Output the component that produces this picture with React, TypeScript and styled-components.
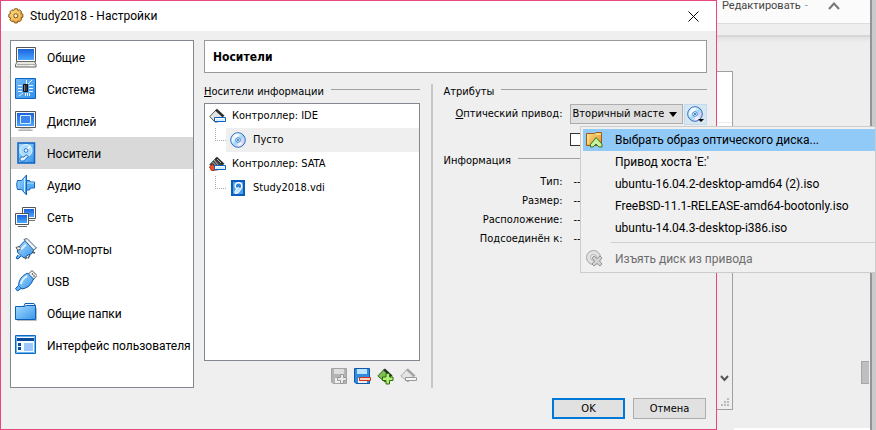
import React from "react";
import styled, { createGlobalStyle, css } from "styled-components";

const ui = `Roboto, "Noto Sans", sans-serif`;
const dlg = `"DejaVu Sans Condensed", "Noto Sans", sans-serif`;

const GlobalStyle = createGlobalStyle`
  * { box-sizing: border-box; }
  body { margin: 0; background: #eeeeee; color: #000; font: 12px/16px ${ui}; }
  button, select, input { font: inherit; color: inherit; margin: 0; }
  button { padding: 0; border: 0; background: none; cursor: default; }
  ul, dl, dd, h1, h2 { margin: 0; padding: 0; list-style: none; font: inherit; }
  svg { display: block; flex: none; }
`;

const Desktop = styled.div`
  display: grid;
  grid-template-columns: minmax(0, 1fr) 159px;
  min-height: 100vh;
  overflow: hidden;
`;

/* ---------- settings dialog ---------- */

const Dialog = styled.main`
  display: flex;
  flex-direction: column;
  border: 1px solid #e8467f;
  background: #efefef;
  z-index: 1;
`;

const TitleBar = styled.header`
  display: flex;
  align-items: center;
  gap: 6px;
  height: 30px;
  padding: 0 16px 0 7px;
  background: #fff;
`;

const Title = styled.h1`
  flex: 1;
  font-size: 12px;
`;

const Body = styled.div`
  flex: 1;
  display: grid;
  grid-template-columns: 184px minmax(0, 1fr);
  gap: 10px;
  padding: 9px 9px 0;
`;

const Nav = styled.nav`
  border: 1px solid #828790;
  background: #fff;
`;

const NavItem = styled.button<{ $active?: boolean }>`
  display: flex;
  align-items: center;
  gap: 10px;
  width: 100%;
  height: 32px;
  padding-left: 4px;
  background: ${(p) => (p.$active ? "#d9d9d9" : "transparent")};
  white-space: nowrap;
  > span { padding-top: 2px; }
`;

const Content = styled.section`
  display: flex;
  flex-direction: column;
  gap: 11px;
  font-family: ${dlg};
  font-size: 11px;
`;

const PageTitle = styled.h2`
  height: 33px;
  padding-left: 8px;
  border: 1px solid #999;
  background: #fff;
  font-size: 12px;
  font-weight: bold;
  line-height: 33px;
`;

const Panes = styled.div`
  flex: 1;
  display: grid;
  grid-template-columns: minmax(0, 9fr) 2px minmax(0, 11fr);
  gap: 11px;
`;

const Pane = styled.div`
  display: flex;
  flex-direction: column;
  min-width: 0;
`;

const Splitter = styled.div`
  background: #c6c6c6;
`;

const GroupTitle = styled.div`
  display: flex;
  gap: 7px;
  height: 16px;
  margin-bottom: 3px;
  white-space: nowrap;
  &::after {
    content: "";
    flex: 1;
    height: 1px;
    margin-top: 5px;
    background: #a0a0a0;
  }
`;

const Tree = styled.ul`
  flex: 1;
  border: 1px solid #828790;
  background: #fff;
`;

const TreeRow = styled.li`
  display: flex;
  align-items: center;
  gap: 6px;
  height: 24px;
  padding-left: 4px;
`;

const TreeLeaf = styled.li<{ $selected?: boolean }>`
  display: flex;
  height: 24px;
  padding-left: 10px;
  &::before {
    content: "";
    width: 10px;
    height: 12px;
    border: dotted #a8a8a8;
    border-width: 0 0 1px 1px;
  }
  > span {
    flex: 1;
    display: flex;
    align-items: center;
    gap: 6px;
    padding-left: 4px;
    background: ${(p) => (p.$selected ? "#efefef" : "transparent")};
  }
`;

const Tools = styled.div`
  display: flex;
  justify-content: flex-end;
  gap: 6px;
  padding: 7px 3px 3px 0;
`;

const Field = styled.div`
  display: grid;
  grid-template-columns: 119px minmax(0, 1fr) auto;
  align-items: center;
  height: 22px;
  > label { text-align: right; white-space: nowrap; }
`;

const SelectBox = styled.span`
  position: relative;
  margin-left: 7px;
  > svg { position: absolute; right: 6px; top: 8px; pointer-events: none; }
`;

const Select = styled.select`
  display: block;
  width: 100%;
  height: 20px;
  padding: 0 18px 0 2px;
  border: 1px solid #adadad;
  border-radius: 0;
  background: #e1e1e1;
  appearance: none;
`;

const DiscAnchor = styled.div`
  position: relative;
  margin-left: 1px;
`;

const DiscButton = styled.button`
  display: grid;
  place-items: center;
  width: 23px;
  height: 21px;
  border: 1px solid #c0dcf3;
  background: #d8e6f2;
`;

const LiveRow = styled.label`
  display: flex;
  align-items: center;
  gap: 6px;
  height: 13px;
  margin: 8px 0 7px 126px;
`;

const Check = styled.input`
  appearance: none;
  width: 13px;
  height: 13px;
  border: 1px solid #333;
  background: #fff;
`;

const Info = styled.dl`
  display: grid;
  grid-template-columns: 119px 1fr;
  column-gap: 11px;
  grid-auto-rows: 19px;
  line-height: 19px;
  > dt { text-align: right; }
`;

const Menu = styled.div`
  position: absolute;
  z-index: 2;
  top: 22px;
  left: -104px;
  width: 296px;
  padding: 2px 0 2px 2px;
  border: 1px solid #ccc;
  background: #f0f0f0;
  font-family: ${ui};
  font-size: 12px;
`;

const MenuItem = styled.button<{ $hot?: boolean }>`
  display: grid;
  grid-template-columns: 32px 1fr;
  align-items: center;
  width: 100%;
  height: 22px;
  text-align: left;
  white-space: nowrap;
  ${(p) => p.$hot && css`background: #91c9f7;`}
  &:disabled { color: #6d6d6d; }
  > svg { margin-left: 3px; }
  > span { grid-column: 2; }
`;

const MenuRule = styled.hr`
  height: 1px;
  margin: 3px 0 5px 28px;
  border: 0;
  background: #d0d0d0;
`;

const Footer = styled.footer`
  display: flex;
  justify-content: flex-end;
  gap: 8px;
  padding: 10px;
  font-family: ${dlg};
  font-size: 11px;
`;

const PushButton = styled.button<{ $primary?: boolean }>`
  width: 73px;
  height: 21px;
  border: ${(p) => (p.$primary ? "2px solid #0078d7" : "1px solid #adadad")};
  background: #e1e1e1;
`;

/* ---------- application behind the dialog ---------- */

const Backdrop = styled.aside`
  display: grid;
  grid-template-columns: minmax(0, 1fr) 6px;
  background: #eee;
`;

const BackPage = styled.div`
  display: flex;
  flex-direction: column;
`;

const EditBar = styled.div`
  display: flex;
  align-items: flex-start;
  height: 24px;
  padding-left: 5px;
  border-bottom: 1px solid #dcdcdc;
  background: #fbfbfb;
  color: #444;
  font-size: 11px;
  line-height: 12px;
`;

const Dash = styled.span`
  margin: 0 20px 0 4px;
  color: #999;
`;

const Shade = styled.div`
  height: 8px;
  margin-top: 11px;
  background: linear-gradient(#d6d6d6 0 2px, #e2e2e2 2px, #eee);
`;

const Canvas = styled.div`
  flex: 1;
  display: flex;
  justify-content: space-between;
  padding-top: 28px;
`;

const InnerWindow = styled.div`
  display: flex;
  flex-direction: column;
  width: 16px;
  margin-bottom: 18px;
  border: solid #a0a0a0;
  border-width: 1px 1px 1px 0;
`;

const InnerTop = styled.div`
  height: 120px;
  background: linear-gradient(#fff 0 50px, #eee 50px 51px, #fff 51px);
`;

const InnerBottom = styled.div`
  flex: 1;
  display: flex;
  flex-direction: column;
  align-items: center;
  justify-content: flex-end;
  gap: 16px;
  padding-bottom: 2px;
`;

const Thumb = styled.div`
  align-self: flex-end;
  width: 8px;
  height: 23px;
  margin: 0 1px 44px 0;
  border: 1px solid #a6a6a6;
  border-right: 0;
  background: #bfbfbf;
`;

const StatusStrip = styled.div`
  height: 2px;
  margin-left: 17px;
  background: #fff;
`;

const Edge = styled.div`
  border-left: 2px solid #92939b;
  background: #cacaca;
`;

/* ---------- icons ---------- */

const HiddenDefs = styled.svg`
  position: absolute;
`;

const Defs = () => (
  <HiddenDefs width="0" height="0" aria-hidden="true">
    <defs>
      <linearGradient id="blue" x1="0" y1="0" x2="0" y2="1">
        <stop offset="0" stopColor="#1a62dc" />
        <stop offset="1" stopColor="#4aa8ff" />
      </linearGradient>
      <linearGradient id="sky" x1="0" y1="0" x2="1" y2="1">
        <stop offset="0" stopColor="#a8dcff" />
        <stop offset="1" stopColor="#3795ea" />
      </linearGradient>
      <linearGradient id="disc" x1="0" y1="0" x2="1" y2="1">
        <stop offset="0" stopColor="#8fc4ff" />
        <stop offset=".3" stopColor="#f4fbff" />
        <stop offset=".5" stopColor="#9ed8f4" />
        <stop offset=".72" stopColor="#e5d6fb" />
        <stop offset="1" stopColor="#79b7f3" />
      </linearGradient>
      <linearGradient id="gold" x1="0" y1="0" x2="1" y2="1">
        <stop offset="0" stopColor="#ffe28a" />
        <stop offset="1" stopColor="#dc8f20" />
      </linearGradient>
    </defs>
  </HiddenDefs>
);

const Svg = ({ s = 22, children }: { s?: number; children: React.ReactNode }) => (
  <svg width={s} height={s} viewBox={`0 0 ${s} ${s}`} fill="none" aria-hidden="true">{children}</svg>
);

const Gear = () => (
  <Svg s={16}>
    <path d="M6.500.8h3l.5 1.700 1.600-.8 2 2-.7 1.700 2 .8v3l-1.900.7.7 1.800-2.100 2-1.600-.8-.7 2H6.400l-.7-2-1.800.8-2-2 .8-1.800-1.900-.8V6.300l1.900-.8-.8-1.700 2-2 1.800.8z" fill="url(#gold)" stroke="#8a5518" />
    <circle cx="7.800" cy="7.800" r="4" stroke="#f9d27b" />
    <circle cx="7.800" cy="7.800" r="2" fill="#fff3d5" stroke="#85511a" />
  </Svg>
);

const General = () => (
  <Svg>
    <path d="M1.500 1.500h19v14h-19z" fill="#fff" stroke="#555" />
    <path d="M3 3h16v11H3z" fill="url(#blue)" />
    <path d="M2.500 15.500h17l1.500 3v2.500H.5v-2.500z" fill="#e8e8e2" stroke="#666" />
    <path d="M2 18.500h18" stroke="#aaa" /><path d="M15 19.500h3" stroke="#fff" />
  </Svg>
);

const System = () => (
  <Svg>
    <path d="M.5.500h20v20H.5z" fill="url(#sky)" stroke="#0d62c4" />
    <path d="M1 1h19v19H1z" fill="#2f8fe8" opacity=".45" />
    <path d="M3 7.500h4M3 10.500h4M3 13.500h4M14 7.500h4M14 10.500h4M14 13.500h4M11.500 2v4M13 6l4-4M4 18l4-3M10.500 15v3M12.500 15v3M14.500 15v3" stroke="#e6f5ff" />
    <path d="M8.500 6.500h4v7h-4z" fill="#30343a" stroke="#111" /><path d="M9.500 7v6" stroke="#777" />
  </Svg>
);

const Display = () => (
  <Svg>
    <path d="M.5 1.500h20v16H.5z" fill="#f8f8f8" stroke="#555" />
    <path d="M2 3h17v13H2z" fill="url(#blue)" />
    <path d="M5.500 5.500h10v8h-10z" fill="#3c86ee" stroke="#d9ecff" />
    <path d="M5.500 18h10M3.500 20h14" stroke="#666" />
    <path d="M4 19h13" stroke="#eee" />
  </Svg>
);

const DiskBox = ({ s = 22 }: { s?: number }) => (
  <svg width={s} height={s} viewBox="0 0 22 22" fill="none" aria-hidden="true">
    <path d="M3 1h16.500v20H3z" fill="url(#sky)" stroke="#0d62c4" strokeWidth="1.500" />
    <circle cx="11" cy="8.500" r="6" fill="#a9dbff" stroke="#e4f5ff" />
    <path d="M11 8.500 15.500 4" stroke="#fff" strokeWidth="1.500" />
    <circle cx="11" cy="8.500" r="1.800" fill="#fff" stroke="#1c6fc9" />
    <path d="M5 17.500c0-2 2-3 3.500-2.500l3-2 2 1.500-3 2.500c0 2-5.500 3.500-5.500.500z" fill="#e2f4ff" stroke="#1a63b8" />
  </svg>
);

const TreeDisk = () => (
  <Svg s={17}>
    <path d="M2 1h12v14H2z" fill="#4ba3ee" stroke="#0b5cbb" strokeWidth="2" />
    <circle cx="8.500" cy="6" r="3.300" fill="#2b86dc" stroke="#fff" strokeWidth="1.400" />
    <path d="M8.500 7 5 11v2.500l3-.5 3-4" fill="#bfe4ff" stroke="#fff" />
  </Svg>
);

const Audio = () => (
  <Svg>
    <path d="M2.500 6.500h4l5-5.500v20l-5-5.500h-4c-1-2.500-1-6.500 0-9z" fill="url(#sky)" stroke="#1265b8" />
    <path d="M11.500 6.500h3l1 1.500h4v6h-4l-1 2h-3z" fill="#58aef4" stroke="#1265b8" />
    <path d="M9.500 4v14" stroke="#d2efff" /><path d="M12 9h7" stroke="#bfe5ff" />
  </Svg>
);

const Network = () => (
  <Svg>
    <path d="M7.500 1.500h13v11h-13z" fill="#fff" stroke="#555" /><path d="M9 3h10v8H9z" fill="url(#blue)" />
    <path d="M12 14.500h8" stroke="#777" />
    <path d="M.5 7.500h13v11H.5z" fill="#fff" stroke="#555" /><path d="M2 9h10v8H2z" fill="url(#blue)" />
    <path d="M3 20.500h9" stroke="#666" />
  </Svg>
);

const Serial = () => (
  <Svg>
    <path d="M3 17l-2 3 2 1 3-3" fill="#5aaef1" stroke="#0d58ab" />
    <path d="M2.500 10.500 10 2.500l9 9-2 4-4 1.500-4 3-6.500-5.500z" fill="url(#sky)" stroke="#0d58ab" />
    <path d="M9 1.500 12 .5l9.500 9.500-3 2z" fill="#e6f5ff" stroke="#49637b" />
    <path d="M1 9.500l3-1 2 2-3 2z" fill="#eee" stroke="#555" />
    <path d="M17 14l3 1M12 19l-2 2M15 17l-2 3.500" stroke="#555" strokeWidth="1.500" />
    <path d="M6 11.500l5-5" stroke="#d9f1ff" strokeWidth="2" />
  </Svg>
);

const Usb = () => (
  <Svg>
    <path d="M13 4.500 17 .5l5 5-4 4.500z" fill="#f4f4f4" stroke="#555" />
    <path d="M17 3.500l1 1M18.500 5.500l1 1" stroke="#555" strokeWidth="1.500" />
    <path d="M10 4.500 12.500 3l6 6-1.500 3c-2 4-5 6-10 7l-3.500-3.500C4 10 6 7 10 4.500z" fill="url(#sky)" stroke="#0d58ab" />
    <path d="M3.500 15.500.5 18.500l2 2.500L6 18.500" fill="#5cb5f3" stroke="#0d58ab" />
    <path d="M6 14c.5-4 3-6 6-8" stroke="#dcf3ff" strokeWidth="2" />
  </Svg>
);

const Folder = () => (
  <Svg>
    <path d="M8.500 5 10 1.500h9l1.500 2V8h-12z" fill="#e7f5ff" stroke="#0d5fb5" />
    <path d="M.5 4.500h9l2-1h9v14H.5z" fill="url(#sky)" stroke="#0d5fb5" />
    <path d="M21.500 6v12.500H2" stroke="#bbb" />
  </Svg>
);

const Interface = () => (
  <Svg>
    <path d="M.5 1.500h20v18H.5z" fill="#f5faff" stroke="#0d68c4" />
    <path d="M1.500 2.500h18v16h-18z" stroke="#69b5f4" />
    <path d="M2 4h17v3H2z" fill="#0b48a0" />
    <path d="M3 9h3v3H3zM3 13h3v3H3z" fill="#0b48a0" />
    <path d="M9 9h9v8H9z" fill="#9dc8ff" />
  </Svg>
);

const Controller = ({ sata }: { sata?: boolean }) => (
  <Svg s={17}>
    <path d="M.8 8.500 7 2l7 6-5.500 6H6z" fill={sata ? "#444" : "#e4e4e4"} stroke="#555" />
    <path d="M6 2.500 8 .8l7.500 7-2 1.500z" fill="#2c2c2c" />
    {sata && <path d="M5 4l4 5M3.500 6l4 4M8 3l4 4" stroke="#bbb" />}
    {sata && <path d="M.5 11 3.500 8.500 5.500 10.500v4H2.500z" fill="#ef5326" stroke="#b32d0a" />}
    <path d="M5.500 9.500h11v4h-11z" fill="#fff" stroke="#0b62bd" />
    <path d="M7 12h8" stroke="#a7dcff" />
  </Svg>
);

const Disc = ({ arrow }: { arrow?: boolean }) => (
  <Svg s={17}>
    <circle cx="8" cy="8" r="7.300" fill="url(#disc)" stroke="#2b6fb8" />
    <path d="M8 8 3.500 3A7 7 0 0 1 8 1.500zM8 8l5 4a7 7 0 0 1-5 2.500z" fill="#fff" opacity=".6" />
    <circle cx="8" cy="8" r="2.300" fill="#fff" stroke="#3d85d2" />
    <circle cx="8" cy="8" r="1" fill="#1a65bb" />
    {arrow && <path d="M11 13h6l-3 3z" fill="#000" />}
  </Svg>
);

const Floppy = ({ off }: { off?: boolean }) => (
  <Svg s={17}>
    <path d="M.5.500h15v15H2L.5 14z" fill={off ? "#b4b4b4" : "#328bdc"} stroke={off ? "#a4a4a4" : "#0d58ab"} />
    <path d="M3 1h10v5H3z" fill={off ? "#dedede" : "#bde4ff"} />
    <path d="M4 10h9v5H4z" fill="#eee" />
    {off
      ? <path d="M9.500 6.500h3v3h3v3h-3v3h-3v-3h-3v-3h3z" fill="#e9e9e9" stroke="#989898" />
      : <path d="M5.500 9.500h11v3h-11z" fill="#ffd2c4" stroke="#c9361c" />}
  </Svg>
);

const ControllerTool = ({ off }: { off?: boolean }) => (
  <Svg s={17}>
    <path d="M.8 8 7 1.500l7 6-6 6.500z" fill={off ? "#e4e4e4" : "#7fbc55"} stroke={off ? "#aaa" : "#3c6c1f"} />
    <path d="M6 2 8 .5l7.500 7-2 1.500z" fill={off ? "#a2a2a2" : "#26331e"} />
    {off
      ? <path d="M5.500 9.500h11v3h-11z" fill="#f5f5f5" stroke="#999" />
      : <path d="M9 5.500h3.500v3.500H16v3.500h-3.500V16H9v-3.500H5.500V9H9z" fill="#b5ef75" stroke="#286d12" />}
  </Svg>
);

const OpenImage = () => (
  <Svg s={17}>
    <path d="M.5 2.500h8l1.500-1h5.500v13H.5z" fill="url(#gold)" stroke="#9b5a16" />
    <path d="M10 3h5" stroke="#fff1b8" /><path d="M2 4v9" stroke="#fff0b0" />
    <path d="M4.500 13.500 10 6.500l6 6.500v3h-3l-3-3-3 3H4.500z" fill="#c8ef9d" stroke="#327526" />
  </Svg>
);

const Eject = () => (
  <Svg s={17}>
    <circle cx="7.500" cy="7.500" r="7" fill="#e2e2e2" stroke="#a4a4a4" />
    <circle cx="7.500" cy="7.500" r="3" fill="#f0f0f0" stroke="#b0b0b0" />
    <path d="M6 8l2-2 3 2.500L14 6l2 2-2.500 3L16 14l-2 2-3-2.500L8 16l-2-2 2.500-3z" fill="#d2d2d2" stroke="#939393" />
  </Svg>
);

const nav: [string, React.ReactNode][] = [
  ["Общие", <General />],
  ["Система", <System />],
  ["Дисплей", <Display />],
  ["Носители", <DiskBox />],
  ["Аудио", <Audio />],
  ["Сеть", <Network />],
  ["COM-порты", <Serial />],
  ["USB", <Usb />],
  ["Общие папки", <Folder />],
  ["Интерфейс пользователя", <Interface />],
];

const images = [
  "Привод хоста 'E:'",
  "ubuntu-16.04.2-desktop-amd64 (2).iso",
  "FreeBSD-11.1-RELEASE-amd64-bootonly.iso",
  "ubuntu-14.04.3-desktop-i386.iso",
];

const info = ["Тип:", "Размер:", "Расположение:", "Подсоединён к:"];

export default function App() {
  return (
    <Desktop>
      <GlobalStyle />
      <Dialog>
        <Defs />
        <TitleBar>
          <Gear />
          <Title>Study2018 - Настройки</Title>
          <button aria-label="Закрыть">
            <svg width="13" height="13" viewBox="0 0 13 13"><path d="M1.500 1.500l10 10M11.500 1.500l-10 10" stroke="#000" /></svg>
          </button>
        </TitleBar>
        <Body>
          <Nav>
            {nav.map(([label, icon]) => (
              <NavItem key={label} $active={label === "Носители"}>{icon}<span>{label}</span></NavItem>
            ))}
          </Nav>
          <Content>
            <PageTitle>Носители</PageTitle>
            <Panes>
              <Pane>
                <GroupTitle><span><u>Н</u>осители информации</span></GroupTitle>
                <Tree>
                  <TreeRow><Controller />Контроллер: IDE</TreeRow>
                  <TreeLeaf $selected><span><Disc />Пусто</span></TreeLeaf>
                  <TreeRow><Controller sata />Контроллер: SATA</TreeRow>
                  <TreeLeaf><span><TreeDisk />Study2018.vdi</span></TreeLeaf>
                </Tree>
                <Tools>
                  <button disabled aria-label="Добавить носитель"><Floppy off /></button>
                  <button aria-label="Удалить носитель"><Floppy /></button>
                  <button aria-label="Добавить контроллер"><ControllerTool /></button>
                  <button disabled aria-label="Удалить контроллер"><ControllerTool off /></button>
                </Tools>
              </Pane>
              <Splitter />
              <Pane>
                <GroupTitle><span>Атрибуты</span></GroupTitle>
                <Field>
                  <label htmlFor="drive"><u>О</u>птический привод:</label>
                  <SelectBox>
                    <Select id="drive"><option>Вторичный мастер IDE</option></Select>
                    <svg width="8" height="5" viewBox="0 0 8 5"><path d="M0 0h8L4 5z" /></svg>
                  </SelectBox>
                  <DiscAnchor>
                    <DiscButton aria-label="Выбрать диск" aria-haspopup="menu"><Disc arrow /></DiscButton>
                    <Menu role="menu">
                      <MenuItem role="menuitem" $hot><OpenImage /><span>Выбрать образ оптического диска...</span></MenuItem>
                      {images.map((name) => (
                        <MenuItem role="menuitem" key={name}><span>{name}</span></MenuItem>
                      ))}
                      <MenuRule />
                      <MenuItem role="menuitem" disabled><Eject /><span>Изъять диск из привода</span></MenuItem>
                    </Menu>
                  </DiscAnchor>
                </Field>
                <LiveRow><Check type="checkbox" aria-label="Живой CD/DVD" /></LiveRow>
                <GroupTitle><span>Информация</span></GroupTitle>
                <Info>
                  {info.map((k) => (
                    <React.Fragment key={k}><dt>{k}</dt><dd>--</dd></React.Fragment>
                  ))}
                </Info>
              </Pane>
            </Panes>
          </Content>
        </Body>
        <Footer>
          <PushButton $primary>OK</PushButton>
          <PushButton>Отмена</PushButton>
        </Footer>
      </Dialog>
      <Backdrop>
        <BackPage>
          <EditBar>
            Редактировать<Dash>-</Dash>
            <svg width="12" height="12" viewBox="0 0 12 12" fill="none"><path d="M1 9l5-5.500L11 9" stroke="#777" strokeWidth="2" /></svg>
          </EditBar>
          <Shade />
          <Canvas>
            <InnerWindow>
              <InnerTop />
              <InnerBottom>
                <svg width="9" height="7" viewBox="0 0 9 7" fill="none"><path d="M1 1l3.500 4L8 1" stroke="#555" strokeWidth="2" /></svg>
                <svg width="9" height="9" viewBox="0 0 9 9" fill="#bbb"><path d="M7 0h2v2H7zM7 3h2v2H7zM4 3h2v2H4zM7 6h2v2H7zM4 6h2v2H4zM1 6h2v2H1z" /></svg>
              </InnerBottom>
            </InnerWindow>
            <Thumb />
          </Canvas>
          <StatusStrip />
        </BackPage>
        <Edge />
      </Backdrop>
    </Desktop>
  );
}
